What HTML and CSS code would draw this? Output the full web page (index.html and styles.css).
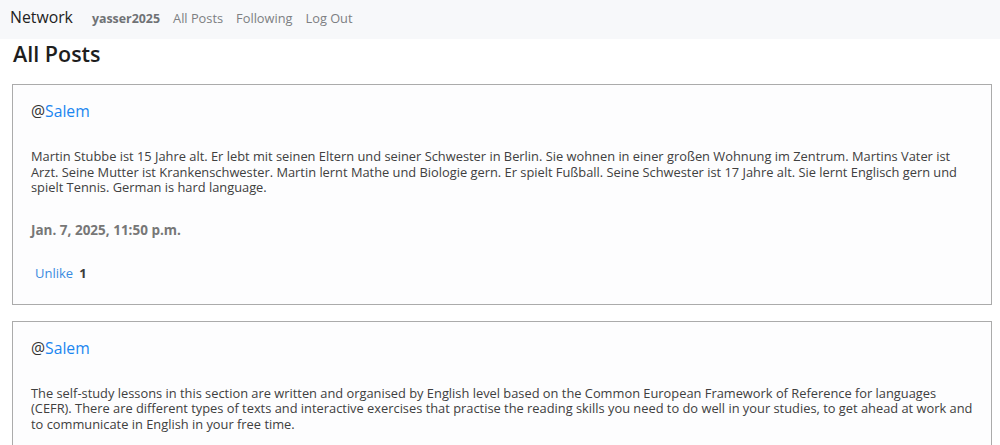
FILE: index.html
```html
<!DOCTYPE html>
<html lang="en">
<head>
<meta charset="utf-8">
<title>Network</title>
<link rel="stylesheet" href="styles.css">
</head>
<body>
<nav class="navbar">
  <a class="brand" href="#">Network</a>
  <ul class="nav-links">
    <li><a class="nav-link user" href="#">yasser2025</a></li>
    <li><a class="nav-link" href="#">All Posts</a></li>
    <li><a class="nav-link" href="#">Following</a></li>
    <li><a class="nav-link" href="#">Log Out</a></li>
  </ul>
</nav>
<main class="page">
  <h3 class="page-title">All Posts</h3>
  <div class="post">
    <h5 class="author">@<a href="#">Salem</a></h5>
    <p class="content">Martin Stubbe ist 15 Jahre alt. Er lebt mit seinen Eltern und seiner Schwester in Berlin. Sie wohnen in einer großen Wohnung im Zentrum. Martins Vater ist Arzt. Seine Mutter ist Krankenschwester. Martin lernt Mathe und Biologie gern. Er spielt Fußball. Seine Schwester ist 17 Jahre alt. Sie lernt Englisch gern und spielt Tennis. German is hard language.</p>
    <p class="date">Jan. 7, 2025, 11:50 p.m.</p>
    <div class="likes"><a class="like-btn" href="#">Unlike</a><span class="count">1</span></div>
  </div>
  <div class="post">
    <h5 class="author">@<a href="#">Salem</a></h5>
    <p class="content">The self-study lessons in this section are written and organised by English level based on the Common European Framework of Reference for languages (CEFR). There are different types of texts and interactive exercises that practise the reading skills you need to do well in your studies, to get ahead at work and to communicate in English in your free time.</p>
    <p class="date">Jan. 7, 2025, 11:42 p.m.</p>
    <div class="likes"><a class="like-btn" href="#">Like</a><span class="count">0</span></div>
  </div>
</main>
</body>
</html>
```
FILE: styles.css
```css
* { box-sizing: border-box; }
body {
  margin: 0;
  font-family: "Open Sans", "Noto Sans", sans-serif;
  color: #212529;
  background: #fff;
}
a { text-decoration: none; }
.navbar {
  display: flex;
  align-items: center;
  height: 39px;
  padding: 0 10px 6px;
  background: #f7f8fa;
}
.brand {
  font-size: 15.8px;
  color: #222;
  margin-right: 19px;
}
.nav-links {
  display: flex;
  list-style: none;
  margin: 0;
  padding: 0;
  gap: 13px;
}
.nav-link {
  font-size: 12.8px;
  color: #7d7f82;
}
.nav-link.user { font-weight: 700; font-size: 12.4px; color: #6f7275; }
.page { padding: 0 8px 0 12px; }
.page-title {
  margin: 0 0 15px 1px;
  font-size: 21.5px;
  font-weight: 600;
  line-height: 30px;
  color: #1e1e1e;
}
.post {
  border: 1px solid #ababab;
  background: #fdfdfe;
  padding: 14px 18px 22px;
  margin-bottom: 16px;
}
.author {
  margin: 0 0 26px;
  font-size: 15.7px;
  font-weight: 400;
  line-height: 24px;
  color: #333;
}
.author a { color: #1b86f0; }
.content {
  margin: 0 0 25px;
  font-size: 12.85px;
  line-height: 15.6px;
  color: #404040;
}
.date {
  margin: 0 0 25px;
  font-size: 13.5px;
  line-height: 18px;
  font-weight: 700;
  color: #777;
}
.likes {
  display: flex;
  gap: 6px;
  padding-left: 4px;
  font-size: 13px;
  line-height: 18px;
}
.like-btn { color: #3a8be0; }
.count { font-weight: 700; color: #3a3a3a; }
```
